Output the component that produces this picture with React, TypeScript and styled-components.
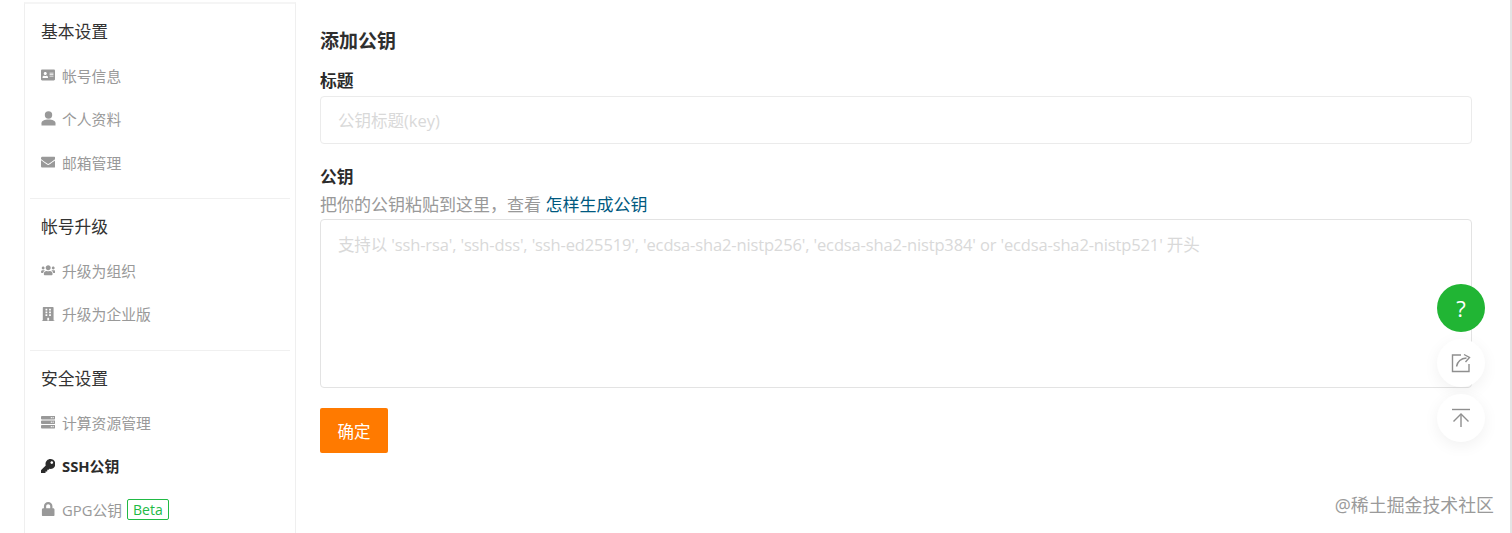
import React from "react";
import styled, { createGlobalStyle } from "styled-components";
import {
  FaAddressCard,
  FaBuilding,
  FaEnvelope,
  FaKey,
  FaLock,
  FaServer,
  FaUsers,
} from "react-icons/fa";

const fontStack = `"Open Sans", "Noto Sans CJK SC", sans-serif`;

const GlobalStyle = createGlobalStyle`
  html, body {
    margin: 0;
    padding: 0;
    height: 533px;
    overflow: hidden;
    background: #fff;
    font-family: ${fontStack};
    color: #2b2b2b;
  }
  input::placeholder, textarea::placeholder {
    color: #d9d9d9;
    opacity: 1;
  }
`;

const Page = styled.div`
  position: relative;
  display: flex;
  height: 533px;
  padding-left: 24px;
  padding-right: 38px;
  box-sizing: border-box;
  overflow: hidden;
  border-right: 2px solid #e4e4e4;
`;

const Sidebar = styled.aside`
  width: 272px;
  flex-shrink: 0;
  box-sizing: border-box;
  margin-top: 2px;
  border-left: 1px solid #efefef;
  border-right: 1px solid #efefef;
  border-top: 2px solid #f5f5f5;
  padding: 0 5px;
`;

const MenuGroup = styled.section<{ $first?: boolean }>`
  border-top: ${(p) => (p.$first ? "none" : "1px solid #f0f0f0")};
  height: ${(p) => (p.$first ? "194px" : "152px")};
  padding-top: 15px;
  box-sizing: border-box;
`;

const GroupTitle = styled.div`
  height: 26px;
  line-height: 26px;
  padding-left: 11px;
  font-size: 16.8px;
  color: #333;
  margin-bottom: 8.5px;
`;

const MenuItem = styled.a<{ $active?: boolean }>`
  display: flex;
  align-items: center;
  height: 43.5px;
  padding-left: 10px;
  font-size: 14.8px;
  color: ${(p) => (p.$active ? "#2b2b2b" : "#999")};
  font-weight: ${(p) => (p.$active ? 700 : 400)};
`;

const IconSlot = styled.span`
  width: 16px;
  margin-right: 6px;
  display: flex;
  justify-content: center;
  font-size: 14.4px;
`;

const BetaTag = styled.span`
  margin-left: 5px;
  padding: 0 5px;
  height: 19px;
  line-height: 19px;
  font-size: 14px;
  color: #21ba45;
  border: 1px solid #21ba45;
  border-radius: 2px;
`;

const Main = styled.main`
  flex: 1;
  padding: 29px 0 0 24px;
  min-width: 0;
`;

const Heading = styled.h3`
  margin: 0 0 18px;
  font-size: 19px;
  line-height: 24px;
  font-weight: 700;
  color: #2f2f2f;
`;

const FieldLabel = styled.label`
  display: block;
  font-size: 16.8px;
  line-height: 20px;
  font-weight: 700;
  color: #2b2b2b;
`;

const TitleInput = styled.input`
  display: block;
  width: 100%;
  box-sizing: border-box;
  height: 48px;
  margin: 5px 0 23px;
  padding: 0 17px;
  border: 1px solid #ebebeb;
  border-radius: 4px;
  font: 16.5px ${fontStack};
  outline: none;
`;

const Hint = styled.div`
  font-size: 17px;
  line-height: 22px;
  margin-top: 7px;
  color: #999;

  a {
    color: #005980;
    text-decoration: none;
  }
`;

const KeyArea = styled.textarea`
  display: block;
  width: 100%;
  box-sizing: border-box;
  height: 169px;
  margin: 3px 0 20px;
  padding: 15px 17px;
  border: 1px solid #e3e3e3;
  border-radius: 4px;
  font: 16.5px/20px ${fontStack};
  letter-spacing: -0.14px;
  resize: none;
  outline: none;
`;

const SubmitButton = styled.button`
  width: 68px;
  height: 45px;
  border: none;
  border-radius: 2px;
  background: #ff7a00;
  color: #fff;
  font: 16.5px ${fontStack};
`;

const FloatColumn = styled.div`
  position: absolute;
  right: 25px;
  top: 284px;
  display: flex;
  flex-direction: column;
  gap: 7px;
`;

const RoundButton = styled.div<{ $green?: boolean }>`
  width: 48px;
  height: 48px;
  border-radius: 50%;
  display: flex;
  align-items: center;
  justify-content: center;
  background: ${(p) => (p.$green ? "#21b534" : "#fff")};
  color: ${(p) => (p.$green ? "#fff" : "#8f8f8f")};
  box-shadow: ${(p) => (p.$green ? "none" : "0 4px 16px rgba(0, 0, 0, 0.06)")};
  font-size: 22px;
`;

const Watermark = styled.div`
  position: absolute;
  right: 16px;
  top: 494px;
  font-size: 17.9px;
  line-height: 22px;
  color: #9a9a9a;
`;

const UserIcon = () => (
  <svg width="15" height="15" viewBox="0 0 15 15" fill="currentColor">
    <circle cx="7.5" cy="4" r="3.7" />
    <path d="M.5 14.6v-2.4C.5 9.8 3.6 8.6 7.5 8.6s7 1.2 7 3.6v2.4z" />
  </svg>
);

const ShareIcon = () => (
  <svg width="22" height="22" viewBox="0 0 22 22" fill="none" stroke="currentColor" strokeWidth="1.4">
    <path d="M11 3H2.5v16.5H19V12" />
    <path d="M6.5 14.5C7.5 9.5 11 6.5 16.5 6" />
    <path d="M14 2.5L19.5 5.5L15.5 10" />
  </svg>
);

const TopIcon = () => (
  <svg width="22" height="22" viewBox="0 0 22 22" fill="none" stroke="currentColor" strokeWidth="1.4">
    <path d="M2 2.5H20" />
    <path d="M11 7V20" />
    <path d="M3.5 14.5L11 7L18.5 14.5" />
  </svg>
);

const menu = [
  {
    title: "基本设置",
    items: [
      { label: "帐号信息", icon: <FaAddressCard size={14} /> },
      { label: "个人资料", icon: <UserIcon /> },
      { label: "邮箱管理", icon: <FaEnvelope /> },
    ],
  },
  {
    title: "帐号升级",
    items: [
      { label: "升级为组织", icon: <FaUsers /> },
      { label: "升级为企业版", icon: <FaBuilding /> },
    ],
  },
  {
    title: "安全设置",
    items: [
      { label: "计算资源管理", icon: <FaServer /> },
      { label: "SSH公钥", icon: <FaKey />, active: true },
      { label: "GPG公钥", icon: <FaLock />, beta: true },
    ],
  },
];

const App: React.FC = () => {
  return (
    <>
      <GlobalStyle />
      <Page>
        <Sidebar>
          {menu.map((group, i) => (
            <MenuGroup key={group.title} $first={i === 0}>
              <GroupTitle>{group.title}</GroupTitle>
              {group.items.map((item) => (
                <MenuItem key={item.label} $active={item.active}>
                  <IconSlot>{item.icon}</IconSlot>
                  {item.label}
                  {item.beta && <BetaTag>Beta</BetaTag>}
                </MenuItem>
              ))}
            </MenuGroup>
          ))}
        </Sidebar>
        <Main>
          <Heading>添加公钥</Heading>
          <FieldLabel>标题</FieldLabel>
          <TitleInput placeholder="公钥标题(key)" />
          <FieldLabel>公钥</FieldLabel>
          <Hint>
            把你的公钥粘贴到这里，查看 <a href="#how">怎样生成公钥</a>
          </Hint>
          <KeyArea placeholder="支持以 'ssh-rsa', 'ssh-dss', 'ssh-ed25519', 'ecdsa-sha2-nistp256', 'ecdsa-sha2-nistp384' or 'ecdsa-sha2-nistp521' 开头" />
          <SubmitButton>确定</SubmitButton>
        </Main>
        <FloatColumn>
          <RoundButton $green>?</RoundButton>
          <RoundButton>
            <ShareIcon />
          </RoundButton>
          <RoundButton>
            <TopIcon />
          </RoundButton>
        </FloatColumn>
        <Watermark>@稀土掘金技术社区</Watermark>
      </Page>
    </>
  );
};

export default App;
